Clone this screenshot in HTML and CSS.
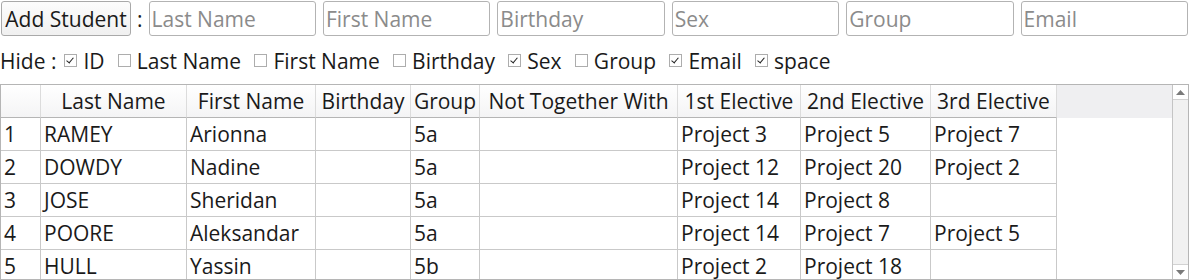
FILE: index.html
```html
<!DOCTYPE html>
<html lang="en">
<head>
    <meta charset="UTF-8">
    <title>Students</title>
    <link rel="stylesheet" href="styles.css">
</head>
<body>

<div class="toolbar">
    <button class="add-btn">Add Student</button>
    <span class="colon">:</span>
    <input type="text" placeholder="Last Name">
    <input type="text" placeholder="First Name">
    <input type="text" placeholder="Birthday">
    <input type="text" placeholder="Sex">
    <input type="text" placeholder="Group">
    <input type="text" placeholder="Email">
</div>

<div class="hide-row">
    <span class="hide-label">Hide :</span>
    <label class="opt"><span class="box checked"></span>ID</label>
    <label class="opt"><span class="box"></span>Last Name</label>
    <label class="opt"><span class="box"></span>First Name</label>
    <label class="opt"><span class="box"></span>Birthday</label>
    <label class="opt"><span class="box checked"></span>Sex</label>
    <label class="opt"><span class="box"></span>Group</label>
    <label class="opt"><span class="box checked"></span>Email</label>
    <label class="opt"><span class="box checked"></span>space</label>
</div>

<div class="sheet">
    <div class="grid">
        <div class="row head">
            <div class="cell"></div>
            <div class="cell">Last Name</div>
            <div class="cell">First Name</div>
            <div class="cell">Birthday</div>
            <div class="cell">Group</div>
            <div class="cell">Not Together With</div>
            <div class="cell">1st Elective</div>
            <div class="cell">2nd Elective</div>
            <div class="cell">3rd Elective</div>
        </div>
        <div class="row">
            <div class="cell num">1</div>
            <div class="cell">RAMEY</div>
            <div class="cell">Arionna</div>
            <div class="cell"></div>
            <div class="cell">5a</div>
            <div class="cell"></div>
            <div class="cell">Project 3</div>
            <div class="cell">Project 5</div>
            <div class="cell">Project 7</div>
        </div>
        <div class="row">
            <div class="cell num">2</div>
            <div class="cell">DOWDY</div>
            <div class="cell">Nadine</div>
            <div class="cell"></div>
            <div class="cell">5a</div>
            <div class="cell"></div>
            <div class="cell">Project 12</div>
            <div class="cell">Project 20</div>
            <div class="cell">Project 2</div>
        </div>
        <div class="row">
            <div class="cell num">3</div>
            <div class="cell">JOSE</div>
            <div class="cell">Sheridan</div>
            <div class="cell"></div>
            <div class="cell">5a</div>
            <div class="cell"></div>
            <div class="cell">Project 14</div>
            <div class="cell">Project 8</div>
            <div class="cell"></div>
        </div>
        <div class="row">
            <div class="cell num">4</div>
            <div class="cell">POORE</div>
            <div class="cell">Aleksandar</div>
            <div class="cell"></div>
            <div class="cell">5a</div>
            <div class="cell"></div>
            <div class="cell">Project 14</div>
            <div class="cell">Project 7</div>
            <div class="cell">Project 5</div>
        </div>
        <div class="row">
            <div class="cell num">5</div>
            <div class="cell">HULL</div>
            <div class="cell">Yassin</div>
            <div class="cell"></div>
            <div class="cell">5b</div>
            <div class="cell"></div>
            <div class="cell">Project 2</div>
            <div class="cell">Project 18</div>
            <div class="cell"></div>
        </div>
    </div>

    <!-- vertical scrollbar -->
    <div class="scrollbar">
        <div class="arrow">
            <svg width="9" height="5" viewBox="0 0 9 5"><polygon points="0,5 9,5 4.5,0" fill="#7a7a7a"/></svg>
        </div>
        <div class="track"></div>
        <div class="arrow">
            <svg width="9" height="5" viewBox="0 0 9 5"><polygon points="0,0 9,0 4.5,5" fill="#7a7a7a"/></svg>
        </div>
    </div>
</div>

</body>
</html>
```

FILE: styles.css
```css
body {
    margin: 0;
    font-family: 'Open Sans', 'Noto Sans', sans-serif;
    font-size: 21px;
    color: #1a1a1a;
    background-color: #fff;
    overflow: hidden;
}

/* top toolbar */
.toolbar {
    display: flex;
    align-items: center;
    gap: 7px;
    padding: 1px 1px 0 1px;
    height: 35px;
}
.add-btn {
    width: 130px;
    height: 35px;
    padding: 0;
    font-family: inherit;
    font-size: 21px;
    color: #1a1a1a;
    background: linear-gradient(#fcfcfc, #f0f0f0);
    border: 1px solid #a9a9a9;
    border-radius: 3px;
}
.colon {
    margin: 0 -1px;
}
.toolbar input {
    flex: 1;
    min-width: 0;
    height: 35px;
    box-sizing: border-box;
    padding: 0 2px;
    font-family: inherit;
    font-size: 21px;
    color: #1a1a1a;
    border: 1px solid #b3b3b3;
    border-radius: 3px;
    outline: none;
}
.toolbar input::placeholder {
    color: #8b8b8b;
}

/* hide checkboxes */
.hide-row {
    display: flex;
    align-items: center;
    height: 28px;
    margin-top: 11px;
    line-height: 28px;
}
.hide-label {
    margin-right: 8px;
}
.opt {
    display: flex;
    align-items: center;
    gap: 6px;
    margin-right: 13.3px;
}
.box {
    width: 11px;
    height: 11px;
    border: 1px solid #adadad;
    background: #fff;
    position: relative;
    top: -1px;
}
.box.checked::after {
    content: "";
    position: absolute;
    left: 3px;
    top: 1px;
    width: 3px;
    height: 6px;
    border: solid #222;
    border-width: 0 1.5px 1.5px 0;
    transform: rotate(40deg);
}

/* table */
.sheet {
    display: flex;
    margin-top: 9px;
    height: 196px;
    box-sizing: border-box;
    border: 1px solid #b5b5b5;
    overflow: hidden;
}
.grid {
    flex: 1;
    overflow: hidden;
}
.row {
    display: grid;
    grid-template-columns: 40px 146px 129px 95px 69px 198px 123px 130px 126px;
    height: 33px;
}
.cell {
    box-sizing: border-box;
    border-right: 1px solid #c9c9c9;
    border-bottom: 1px solid #c9c9c9;
    padding-left: 3px;
    line-height: 32px;
    white-space: nowrap;
    overflow: hidden;
}
.head {
    background-color: #efeff1;
}
.head .cell {
    text-align: center;
    padding-left: 0;
    background: linear-gradient(#ffffff, #f4f4f5);
    border-right-color: #dcdcdc;
    border-bottom-color: #b5b5b5;
}
.num {
    background: #fff;
}

/* scrollbar */
.scrollbar {
    width: 15px;
    border-left: 1px solid #c4c4c4;
    display: flex;
    flex-direction: column;
    background: #f1f1f1;
}
.arrow {
    height: 14px;
    background: #fff;
    border-bottom: 1px solid #d2d2d2;
    display: flex;
    align-items: center;
    justify-content: center;
}
.arrow:last-child {
    border-bottom: none;
    border-top: 1px solid #d2d2d2;
}
.track {
    flex: 1;
}
```
